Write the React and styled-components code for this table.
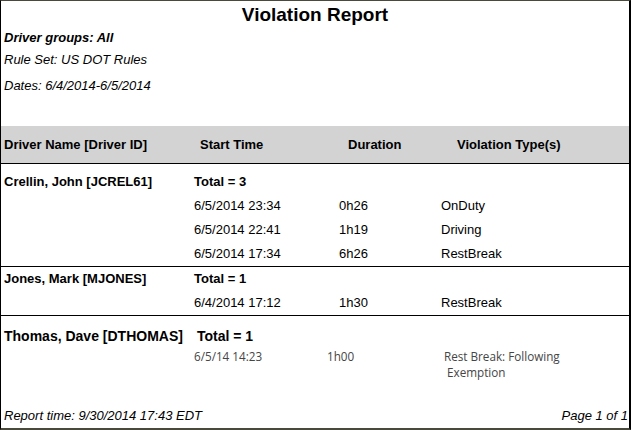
import styled, { createGlobalStyle } from 'styled-components';

const GlobalStyle = createGlobalStyle`
   html, body {
      margin: 0;
      padding: 0;
      background: #fff;
   }
   body {
      font-family: "Liberation Sans", Arial, sans-serif;
      color: #000;
   }
`;

const groups = [
   {
      name: 'Crellin, John [JCREL61]',
      total: 3,
      padTop: 6,
      rows: [
         { start: '6/5/2014 23:34', duration: '0h26', type: 'OnDuty' },
         { start: '6/5/2014 22:41', duration: '1h19', type: 'Driving' },
         { start: '6/5/2014 17:34', duration: '6h26', type: 'RestBreak' }
      ]
   },
   {
      name: 'Jones, Mark [MJONES]',
      total: 1,
      padTop: 0,
      rows: [
         { start: '6/4/2014 17:12', duration: '1h30', type: 'RestBreak' }
      ]
   }
];

const App = () => {
   return (
      <>
         <GlobalStyle />
         <Page>
            <Title>Violation Report</Title>
            <MetaLine $bold $gap={1}>Driver groups: All</MetaLine>
            <MetaLine $gap={2}>Rule Set: US DOT Rules</MetaLine>
            <MetaLine $gap={6}>Dates: 6/4/2014-6/5/2014</MetaLine>

            <HeaderRow>
               <HeadCell>Driver Name [Driver ID]</HeadCell>
               <HeadCell $shift={6}>Start Time</HeadCell>
               <HeadCell $shift={9}>Duration</HeadCell>
               <HeadCell $shift={16}>Violation Type(s)</HeadCell>
            </HeaderRow>

            {groups.map((g) => (
               <Group key={g.name} $padTop={g.padTop} $divider>
                  <Row>
                     <Name>{g.name}</Name>
                     <Total>Total = {g.total}</Total>
                  </Row>
                  {g.rows.map((r) => (
                     <Row key={r.start}>
                        <Cell />
                        <Cell>{r.start}</Cell>
                        <Cell>{r.duration}</Cell>
                        <Cell>{r.type}</Cell>
                     </Row>
                  ))}
               </Group>
            ))}

            <Group $padTop={8}>
               <Row>
                  <BigName>Thomas, Dave [DTHOMAS]</BigName>
                  <BigTotal>Total = 1</BigTotal>
               </Row>
               <LegacyRow>
                  <span />
                  <span>6/5/14 14:23</span>
                  <LegacyDuration>1h00</LegacyDuration>
                  <LegacyType>
                     Rest Break: Following
                     <br />
                     &nbsp;Exemption
                  </LegacyType>
               </LegacyRow>
            </Group>

            <Footer>
               <span>Report time: 9/30/2014 17:43 EDT</span>
               <span>Page 1 of 1</span>
            </Footer>
         </Page>
      </>
   );
};

const Page = styled.div`
   width: 631px;
   height: 430px;
   box-sizing: border-box;
   border-top: 1px solid #4a4a3c;
   border-bottom: 2px solid #4a4a3c;
   border-left: 1px solid #000;
   border-right: 2px solid #000;
   display: flex;
   flex-direction: column;
   overflow: hidden;
`;

const Title = styled.h1`
   margin: 2px 0 0;
   height: 24px;
   line-height: 24px;
   font-size: 19px;
   font-weight: bold;
   text-align: center;
`;

const MetaLine = styled.div`
   margin-top: ${(p) => p.$gap}px;
   padding-left: 3px;
   height: 20px;
   line-height: 20px;
   font-size: 13px;
   font-style: italic;
   font-weight: ${(p) => (p.$bold ? 'bold' : 'normal')};
`;

const columns = '190px 145px 102px 1fr';

const HeaderRow = styled.div`
   margin-top: 30px;
   height: 37px;
   background: #d3d3d3;
   border-bottom: 1px solid #000;
   display: grid;
   grid-template-columns: ${columns};
   align-items: center;
   padding-left: 3px;
   font-size: 13px;
   font-weight: bold;
`;

const HeadCell = styled.div`
   padding-left: ${(p) => p.$shift || 0}px;
   white-space: nowrap;
`;

const Group = styled.div`
   padding-top: ${(p) => p.$padTop}px;
   border-bottom: ${(p) => (p.$divider ? '1px solid #000' : 'none')};
`;

const Row = styled.div`
   display: grid;
   grid-template-columns: ${columns};
   padding-left: 3px;
   height: 24px;
   line-height: 24px;
   font-size: 13px;
`;

const Cell = styled.div`
   white-space: nowrap;
`;

const Name = styled.div`
   font-weight: bold;
   white-space: nowrap;
`;

const Total = styled.div`
   font-weight: bold;
   white-space: nowrap;
`;

const BigName = styled(Name)`
   font-size: 14px;
`;

const BigTotal = styled(Total)`
   font-size: 14px;
   padding-left: 3px;
`;

const LegacyRow = styled.div`
   display: grid;
   grid-template-columns: ${columns};
   padding-left: 3px;
   font-family: "Open Sans", "DejaVu Sans", sans-serif;
   font-size: 11.7px;
   line-height: 16px;
   color: #454545;
`;

const LegacyDuration = styled.span`
   margin-left: -12px;
`;

const LegacyType = styled.span`
   padding-left: 3px;
`;

const Footer = styled.div`
   margin-top: auto;
   padding: 0 1px 4px 3px;
   display: flex;
   justify-content: space-between;
   height: 16px;
   line-height: 16px;
   font-size: 13px;
   font-style: italic;
`;

export default App;
